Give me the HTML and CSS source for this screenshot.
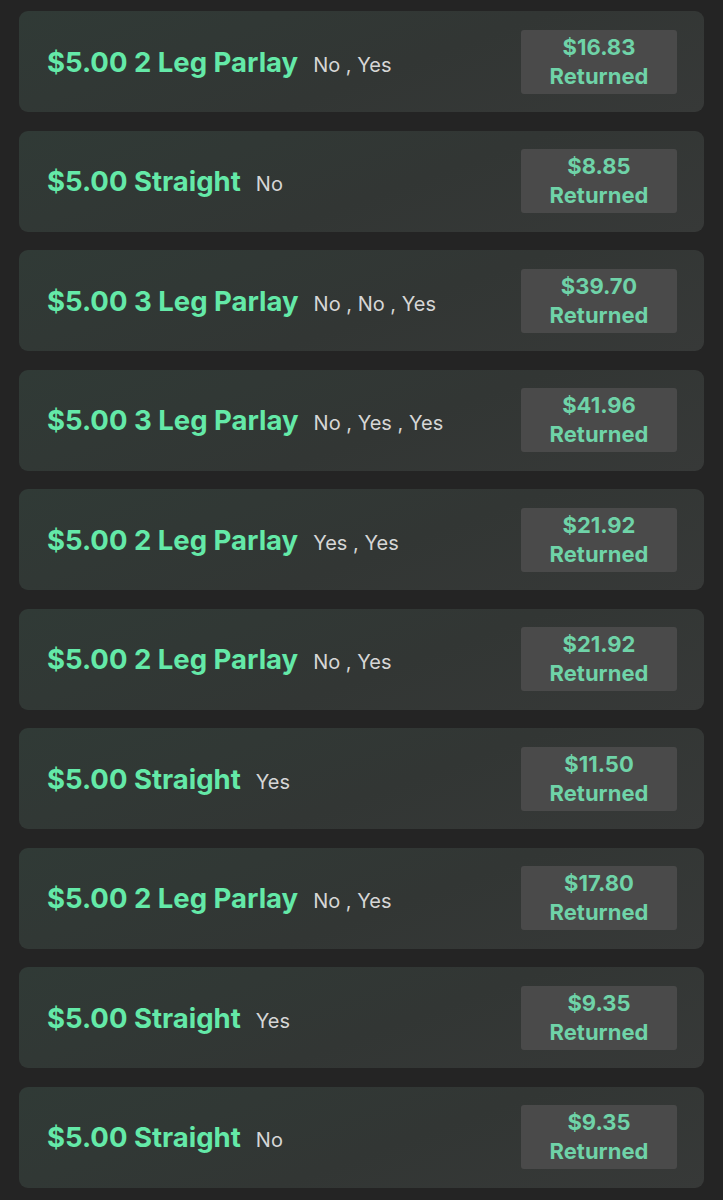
FILE: index.html
```html
<!DOCTYPE html>
<html lang="en">
<head>
    <meta charset="UTF-8">
    <title>Bets</title>
<link rel="stylesheet" href="styles.css">
</head>
<body>
    <ul class="bets">
        <li class="bet">
            <div class="bet-info"><span class="bet-name">$5.00 2 Leg Parlay</span><span class="bet-legs">No , Yes</span></div>
            <div class="bet-return">$16.83<br>Returned</div>
        </li>
        <li class="bet">
            <div class="bet-info"><span class="bet-name">$5.00 Straight</span><span class="bet-legs">No</span></div>
            <div class="bet-return">$8.85<br>Returned</div>
        </li>
        <li class="bet">
            <div class="bet-info"><span class="bet-name">$5.00 3 Leg Parlay</span><span class="bet-legs">No , No , Yes</span></div>
            <div class="bet-return">$39.70<br>Returned</div>
        </li>
        <li class="bet">
            <div class="bet-info"><span class="bet-name">$5.00 3 Leg Parlay</span><span class="bet-legs">No , Yes , Yes</span></div>
            <div class="bet-return">$41.96<br>Returned</div>
        </li>
        <li class="bet">
            <div class="bet-info"><span class="bet-name">$5.00 2 Leg Parlay</span><span class="bet-legs">Yes , Yes</span></div>
            <div class="bet-return">$21.92<br>Returned</div>
        </li>
        <li class="bet">
            <div class="bet-info"><span class="bet-name">$5.00 2 Leg Parlay</span><span class="bet-legs">No , Yes</span></div>
            <div class="bet-return">$21.92<br>Returned</div>
        </li>
        <li class="bet">
            <div class="bet-info"><span class="bet-name">$5.00 Straight</span><span class="bet-legs">Yes</span></div>
            <div class="bet-return">$11.50<br>Returned</div>
        </li>
        <li class="bet">
            <div class="bet-info"><span class="bet-name">$5.00 2 Leg Parlay</span><span class="bet-legs">No , Yes</span></div>
            <div class="bet-return">$17.80<br>Returned</div>
        </li>
        <li class="bet">
            <div class="bet-info"><span class="bet-name">$5.00 Straight</span><span class="bet-legs">Yes</span></div>
            <div class="bet-return">$9.35<br>Returned</div>
        </li>
        <li class="bet">
            <div class="bet-info"><span class="bet-name">$5.00 Straight</span><span class="bet-legs">No</span></div>
            <div class="bet-return">$9.35<br>Returned</div>
        </li>
    </ul>
</body>
</html>
```

FILE: styles.css
```css
*{margin:0;padding:0;box-sizing:border-box;}
ul{list-style:none;}
body{background:#242424;font-family:Inter,"Liberation Sans",sans-serif;}
.bets{display:flex;flex-direction:column;gap:18.5px;padding:11px 19px 0 19px;}
.bet{display:flex;align-items:center;justify-content:space-between;height:101px;padding:0 27px 0 28px;border-radius:9px;background:linear-gradient(160deg,#303a36 0%,#323634 55%,#373938 100%);}
.bet-info{display:flex;align-items:baseline;}
.bet-name{font-size:27.5px;font-weight:700;color:#64e9a8;}
.bet-legs{font-size:20px;color:#d6d6d6;margin-left:15px;}
.bet-return{width:156px;height:64px;background:#4a4a4a;border-radius:3px;color:#6fd3a8;font-size:22px;font-weight:700;line-height:29px;text-align:center;padding-top:3px;}
```
